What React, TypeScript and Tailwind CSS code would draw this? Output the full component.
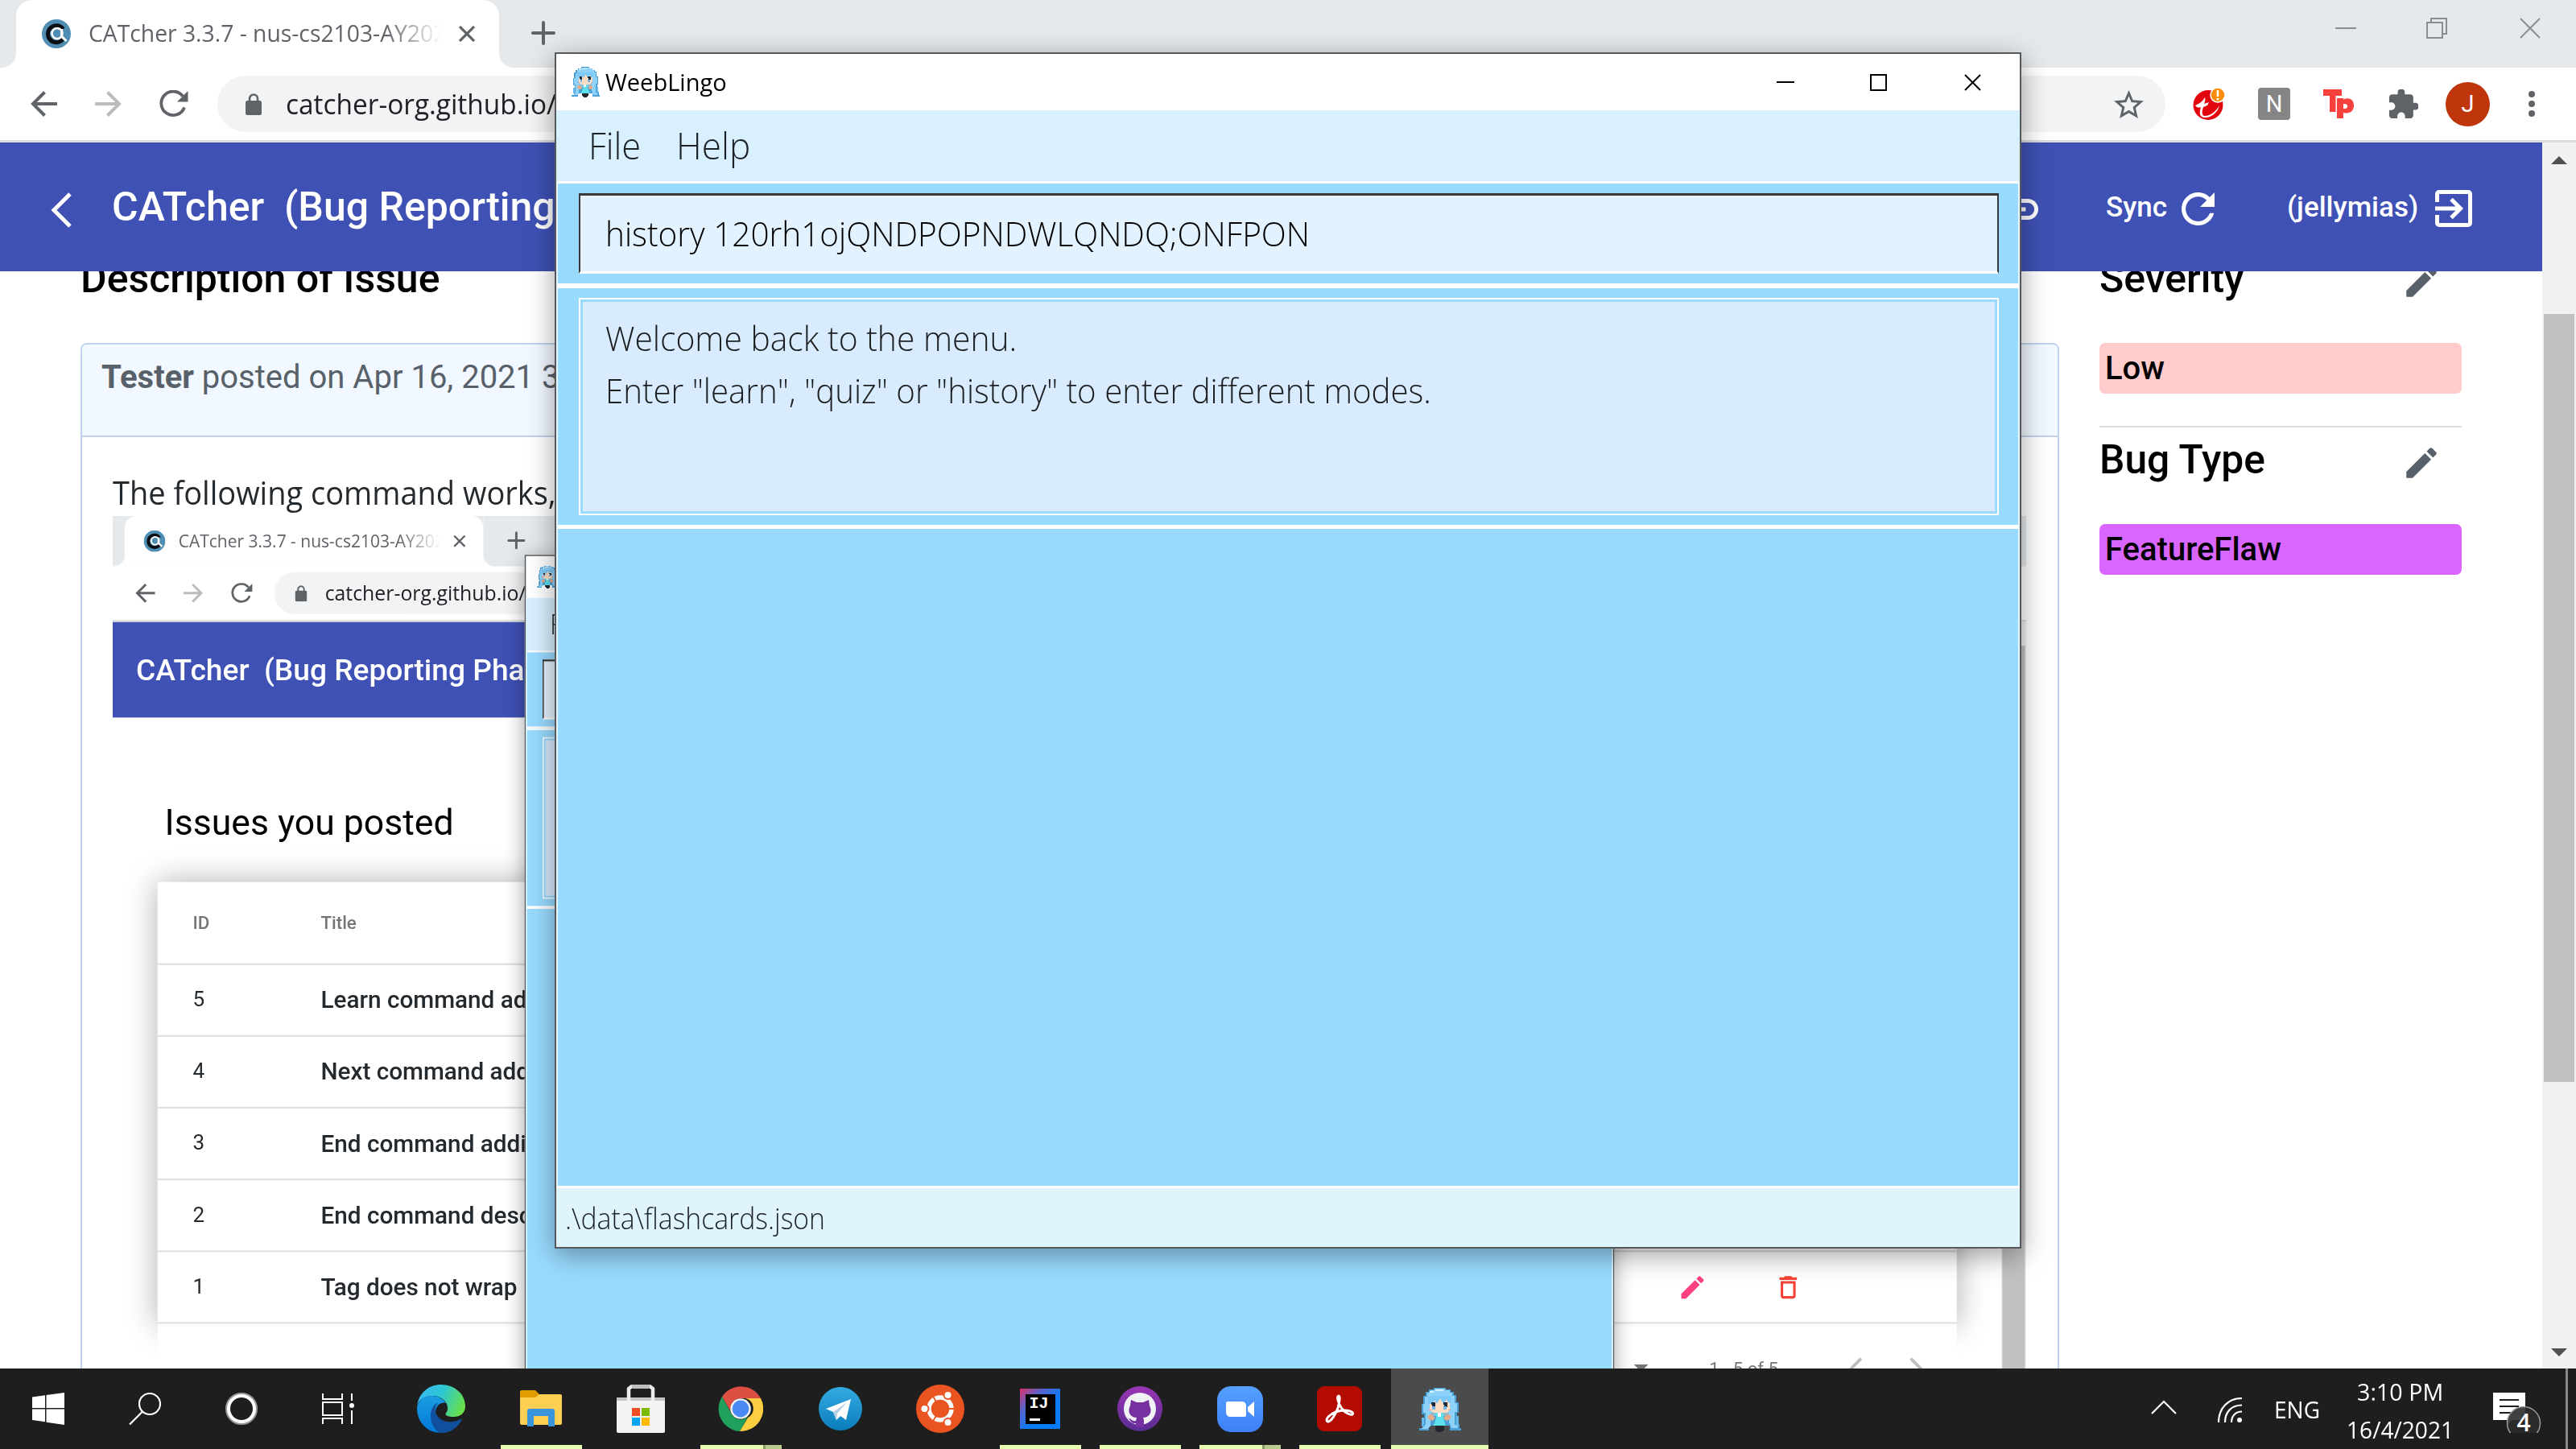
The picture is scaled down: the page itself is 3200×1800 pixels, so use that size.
import React, { useLayoutEffect, useRef, useState } from "react";

/* Text squeezed or stretched to a given width. */
function Fit({ w, className = "", children }: { w: number; className?: string; children: React.ReactNode }) {
  const ref = useRef<HTMLSpanElement>(null);
  const [sx, setSx] = useState(1);
  useLayoutEffect(() => {
    if (ref.current && ref.current.offsetWidth) setSx(w / ref.current.offsetWidth);
  }, [w]);
  return (
    <span className={`block shrink-0 whitespace-pre ${className}`} style={{ width: w }}>
      <span ref={ref} className="inline-block origin-left" style={{ transform: `scaleX(${sx})` }}>
        {children}
      </span>
    </span>
  );
}

const segoe = "font-['Open_Sans','Noto_Sans',sans-serif]";
const roboto = "font-['Roboto',sans-serif]";

function Girl({ className }: { className: string }) {
  return (
    <svg viewBox="8 6 52 58" preserveAspectRatio="none" className={className} shapeRendering="crispEdges">
      <path d="M26 8h15v2h6v3h4v4h3v9h3v14h-2v14h3v5h2v3h-14v-6H20v6H8v-3h4v-4h2V42h-3V28h2V18h3v-5h4v-3h6z" fill="#4a9fd4" />
      <path d="M27 9h13v2h6v3h3v4h3v9h3v12h-3v16h4v4h-8l-3-8V40H22v16l-3 4h-8l5-6V40h-3V28h2V19h3v-5h4v-3h5z" fill="#8ed2fa" />
      <path d="M28 10h10v2H26v2h-5v-2h7z" fill="#d4f0ff" />
      <path d="M21 22h25v14l-4 4H26l-5-4z" fill="#fbdcc2" />
      <path d="M19 18h29v6l-3 4-3-5-4 5-4-6-4 6-3-4-3 5-5-2z" fill="#7cc8f6" />
      <path d="M23 26h5v6h-4zM38 26h5v6h-4z" fill="#1d2a3b" />
      <path d="M24 31h4v4h-4zM38 31h4v4h-4z" fill="#6fb4ea" />
      <path d="M20 35h3v2h-3zM44 35h3v2h-3z" fill="#f59a86" />
      <path d="M22 40h23v4H22z" fill="#8fb9cf" />
      <path d="M19 43l4-2 5 5-4 4-5-3zM47 43l-4-2-5 5 4 4 5-3z" fill="#dfab8c" />
      <path d="M28 40h10v6l3 10H26l3-10z" fill="#5be0ec" />
      <path d="M31 40h4v5h-4z" fill="#f4f4f4" />
      <path d="M28 56h11v5l-3 3h-5l-3-3z" fill="#22282e" />
      <path d="M11 46h3v8l-3 4zM54 44h3v12h-3z" fill="#67b9ec" />
    </svg>
  );
}

function Favicon() {
  return (
    <svg viewBox="0 0 36 36" className="h-9 w-9 shrink-0">
      <circle cx="18" cy="18" r="18" fill="#4f8db3" />
      <path d="M26.5 12A10.5 10.5 0 1 0 26 25" fill="none" stroke="#0b0f14" strokeWidth="5" />
      <circle cx="19" cy="17.500" r="6.500" fill="#4f8db3" stroke="#fff" strokeWidth="2.600" />
      <path d="M24.500 12v9l6 6" fill="none" stroke="#fff" strokeWidth="3" />
    </svg>
  );
}

function Pencil({ className }: { className: string }) {
  return (
    <svg viewBox="0 0 24 24" className={className} fill="currentColor">
      <path d="M3 17.250V21h3.750L17.810 9.940l-3.750-3.750L3 17.250zM20.710 7.040c.39-.39.39-1.020 0-1.410l-2.340-2.340c-.39-.39-1.020-.39-1.410 0l-1.830 1.830 3.750 3.750 1.830-1.830z" />
    </svg>
  );
}

function Refresh({ className }: { className: string }) {
  return (
    <svg viewBox="4 4 16 16" className={className} fill="currentColor">
      <path d="M17.650 6.350C16.200 4.900 14.210 4 12 4c-4.420 0-7.990 3.580-7.990 8s3.570 8 7.990 8c3.730 0 6.840-2.550 7.730-6h-2.080c-.82 2.330-3.040 4-5.650 4-3.310 0-6-2.690-6-6s2.690-6 6-6c1.660 0 3.140.69 4.220 1.780L13 11h7V4l-2.350 2.350z" />
    </svg>
  );
}

function ThinReload() {
  return (
    <svg viewBox="0 0 36 34" className="h-[34px] w-9 shrink-0" fill="none">
      <path d="M31 21.500A14.800 14.800 0 1 1 29 7.500" stroke="#5f6368" strokeWidth="3.800" />
      <path d="M35.500 1v13.500H22z" fill="#5f6368" />
    </svg>
  );
}

function BrowserFrame({ inner, children }: { inner?: boolean; children: React.ReactNode }) {
  return (
    <div className="flex h-[1700px] w-[3200px] flex-col bg-white">
      {/* tab strip */}
      <div className="flex h-[84px] shrink-0 bg-white">
        <div className="w-5 rounded-br-[18px] bg-[#e5e9ec]" />
        <div className="w-[600px] bg-[#e5e9ec]">
          <div className="flex h-full items-center rounded-t-[20px] bg-white pl-8">
            <Favicon />
            <div className="mb-[2px] ml-[22px] w-[438px] overflow-hidden [mask-image:linear-gradient(to_right,#000_84%,transparent_100%)]">
              <Fit w={444} className={`${segoe} text-[30px] leading-[42px] text-[#5f6368]`}>CATcher 3.3.7 - nus-cs2103-AY202</Fit>
            </div>
            <svg viewBox="0 0 20 20" className="ml-[22px] h-5 w-5" stroke="#5f6368" strokeWidth="3.200">
              <path d="M1 1l18 18M19 1L1 19" />
            </svg>
          </div>
        </div>
        <div className="flex flex-1 items-start rounded-bl-[18px] bg-[#e5e9ec]">
          <svg viewBox="0 0 30 30" className="mt-[26px] ml-[40px] h-[30px] w-[30px]" stroke="#5f6368" strokeWidth="4" strokeLinecap="round">
            <path d="M15 2v26M2 15h26" />
          </svg>
          <div className="ml-auto flex items-center pt-[22px] pr-[44px]">
            <div className="mr-[87px] h-[2px] w-[26px] bg-[#8b8e90]" />
            <svg viewBox="0 0 26 26" className="mr-[90px] h-[26px] w-[26px]" fill="none" stroke="#8b8e90" strokeWidth="2">
              <path d="M1 6h19v19H1zM6 6V1h19v19h-5" />
            </svg>
            <svg viewBox="0 0 26 26" className="h-[26px] w-[26px]" stroke="#8b8e90" strokeWidth="2">
              <path d="M1 1l24 24M25 1L1 25" />
            </svg>
          </div>
        </div>
      </div>
      {/* toolbar */}
      <div className="flex h-[93px] shrink-0 items-center border-b-[3px] border-[#d9dbdf] pr-[49px] pl-[38px]">
        <svg viewBox="0 0 33 32" className="h-8 w-[33px]" fill="none" stroke="#5f6368" strokeWidth="4">
          <path d="M33 16H4M17.500 1.500L3 16l14.500 14.500" />
        </svg>
        <svg viewBox="0 0 33 32" className="ml-[47px] h-8 w-[33px]" fill="none" stroke="#babcbe" strokeWidth="4">
          <path d="M0 16h29M15.500 1.500L30 16 15.500 30.500" />
        </svg>
        <div className="ml-[47px]"><ThinReload /></div>
        <div className="ml-9 flex h-[70px] w-[2420px] items-center rounded-full bg-[#f1f3f4] pr-[27px] pl-[35px]">
          <svg viewBox="0 0 20 27" className="h-[27px] w-5" fill="#5f6368">
            <path d="M2.500 9h15a2.500 2.500 0 0 1 2.500 2.500v13a2.500 2.500 0 0 1-2.500 2.500h-15A2.500 2.500 0 0 1 0 24.500v-13A2.500 2.500 0 0 1 2.500 9z" />
            <path d="M5 10V6.500a5 5 0 0 1 10 0V10" fill="none" stroke="#5f6368" strokeWidth="2.600" />
          </svg>
          <Fit w={336} className={`${segoe} ml-[30px] text-[35px] leading-[48px] text-[#202124]`}>catcher-org.github.io/</Fit>
          <svg viewBox="2 2 20 19" className="ml-auto h-[35px] w-[37px]" fill="#5f6368">
            <path d="M22 9.240l-7.190-.62L12 2 9.190 8.630 2 9.240l5.460 4.730L5.820 21 12 17.270 18.180 21l-1.630-7.030L22 9.240zM12 15.400l-3.760 2.270 1-4.280-3.320-2.880 4.380-.38L12 6.100l1.710 4.040 4.380.38-3.320 2.880 1 4.280L12 15.400z" />
          </svg>
        </div>
        <svg viewBox="0 0 40 40" className="ml-[34px] h-10 w-10">
          <circle cx="19" cy="21.500" r="18.500" fill="#e2050f" />
          <path d="M3 22c5-2 9-5 12-10 1 3 0 5-1 8l6-2-2 4-5 2c-2 6-2 11 2 11 7 0 14-6 18-13-2 9-11 16-19 15-6-1-6-6-4-13-2 1-5 1-7-2z" fill="#fff" />
          <circle cx="31" cy="9" r="9" fill="#ff8c0a" stroke="#fff" strokeWidth="1.500" />
          <path d="M31 3v8M31 13v2.500" stroke="#fff" strokeWidth="2.600" />
        </svg>
        <div className={`${roboto} ml-[41px] flex h-10 w-10 items-center justify-center rounded-[4px] bg-[#858585] text-[29px] leading-none text-white`}>N</div>
        <svg viewBox="0 0 38 36" className="ml-[41px] h-9 w-[38px]" fill="#f8403c">
          <path d="M0 0h23v8h-7.500v20H8V8H0z" />
          <path fillRule="evenodd" d="M17 11h8v1.500c8-3.500 13 1 13 7.500 0 7-5 11-13 9V36h-8zM25 18v6c7 1 7-7 0-6z" />
        </svg>
        <svg viewBox="2 1.500 20.500 20.500" className="ml-[44px] h-9 w-9" fill="#5f6368">
          <path d="M20.500 11H19V7c0-1.100-.9-2-2-2h-4V3.500C13 2.120 11.880 1 10.500 1S8 2.120 8 3.500V5H4c-1.100 0-1.990.9-1.990 2v3.800H3.500c1.490 0 2.700 1.210 2.700 2.700s-1.210 2.700-2.700 2.700H2V20c0 1.100.9 2 2 2h3.800v-1.500c0-1.490 1.210-2.700 2.700-2.700 1.490 0 2.700 1.210 2.700 2.700V22H17c1.100 0 2-.9 2-2v-4h1.500c1.380 0 2.500-1.120 2.500-2.500S21.880 11 20.500 11z" />
        </svg>
        <div className={`${roboto} ml-[34px] flex h-[55px] w-[55px] items-center justify-center rounded-full bg-[#bf360c] text-[29px] leading-none text-white`}>J</div>
        <div className="mr-auto ml-[48px] flex flex-col gap-1">
          <div className="h-2 w-2 rounded-full bg-[#5f6368]" />
          <div className="h-2 w-2 rounded-full bg-[#5f6368]" />
          <div className="h-2 w-2 rounded-full bg-[#5f6368]" />
        </div>
      </div>
      {/* viewport */}
      <div className="flex min-h-0 flex-1">
        <div className="flex w-[3158px] flex-col overflow-hidden">
          <header className={`${roboto} flex h-40 shrink-0 items-center bg-[#3f51b5] font-medium text-white`}>
            {inner ? (
              <div className="w-[39px]" />
            ) : (
              <svg viewBox="0 0 26 44" className="mt-2 mr-[50px] ml-[63px] h-11 w-[26px]" fill="none" stroke="#fff" strokeWidth="5">
                <path d="M24 2L4 22l20 20" />
              </svg>
            )}
            <div className="text-[50px] leading-[60px] whitespace-pre">CATcher  (Bug Reporting Phase)</div>
            <div className="mt-[4px] ml-auto flex items-center text-[35px] leading-[42px]">
              <svg viewBox="2 7 20 10" className="mt-[2px] mr-[84px] h-[26px] w-[52px]" fill="currentColor">
                <path d="M3.900 12c0-1.710 1.390-3.100 3.100-3.100h4V7H7c-2.760 0-5 2.240-5 5s2.240 5 5 5h4v-1.900H7c-1.710 0-3.100-1.390-3.100-3.100zM8 13h8v-2H8v2zm9-6h-4v1.900h4c1.710 0 3.100 1.390 3.100 3.100s-1.390 3.100-3.100 3.100h-4V17h4c2.760 0 5-2.240 5-5s-2.240-5-5-5z" />
              </svg>
              <Fit w={76} className="-mt-[3px]">Sync</Fit>
              <Refresh className="ml-[18px] h-[41px] w-[41px]" />
              <Fit w={163} className="-mt-[3px] ml-[90px]">(jellymias)</Fit>
              <svg viewBox="0 0 46 46" className="mr-[87px] ml-[21px] h-[46px] w-[46px]" fill="none" stroke="#fff" strokeWidth="5">
                <path d="M2.500 15V5a2.500 2.500 0 0 1 2.500-2.500h36A2.500 2.500 0 0 1 43.500 5v36a2.500 2.500 0 0 1-2.500 2.500H5A2.500 2.500 0 0 1 2.500 41V31" />
                <path d="M0 23h31M20 11.500L31.500 23 20 34.500" />
              </svg>
            </div>
          </header>
          <div className="min-h-0 flex-1 overflow-hidden">{children}</div>
        </div>
        <div className="flex flex-1 flex-col items-center bg-[#f1f1f1] pt-[17px] pb-[15px]">
          <svg viewBox="0 0 20 10" className="h-[10px] w-5" fill="#505050"><path d="M0 10L10 0l10 10z" /></svg>
          {inner ? (
            <div className="mt-[13px] h-[1400px] w-[38px] bg-[#c1c1c1]" />
          ) : (
            <div className="mt-[186px] h-[954px] w-[38px] bg-[#c1c1c1]" />
          )}
          <svg viewBox="0 0 20 10" className="mt-auto h-[10px] w-5" fill="#505050"><path d="M0 0l10 10L20 0z" /></svg>
        </div>
      </div>
    </div>
  );
}

function WeebWindow() {
  return (
    <div className={`${segoe} absolute top-[65px] left-[689px] flex h-[1486px] w-[1822px] flex-col border-2 border-[#55595c] bg-white shadow-[0_8px_32px_rgba(0,0,0,0.38)]`}>
      <div className="flex h-[70px] shrink-0 items-center pl-[19px]">
        <Girl className="mb-[2px] h-[39px] w-[35px]" />
        <Fit w={151} className="ml-[7px] text-[30px] leading-[42px] text-black">WeebLingo</Fit>
        <div className="ml-auto flex items-center pr-[48px]">
          <div className="mr-[94px] h-[2px] w-[22px] bg-black" />
          <div className="mr-[96px] h-[21px] w-[21px] border-2 border-black" />
          <svg viewBox="0 0 21 21" className="h-[21px] w-[21px]" stroke="#000" strokeWidth="2"><path d="M1 1l19 19M20 1L1 20" /></svg>
        </div>
      </div>
      <div className="flex h-[88px] shrink-0 items-center bg-[#d9f1ff] pb-[3px] pl-[40px] text-[46px] leading-[60px] font-light text-[#1c2226]">
        <Fit w={65}>File</Fit>
        <Fit w={92} className="ml-[44px]">Help</Fit>
      </div>
      <div className="flex min-h-0 flex-1 flex-col border-x-2 border-[#e8f6ff] bg-[#99dbff]">
        <div className="h-[130px] shrink-0 border-y-[3px] border-white pt-[12px] pr-[24px] pl-[26px]">
          <div className="flex h-[100px] items-center border-x-2 border-t-[3px] border-b-[3px] border-x-[#383838] border-t-[#383838] border-b-white bg-[#e3f2ff] pl-[31px] text-[42px] leading-[56px] font-light text-black">
            <Fit w={875}>history 120rh1ojQNDPOPNDWLQNDQ;ONFPON</Fit>
          </div>
        </div>
        <div className="h-[302px] shrink-0 border-t-[3px] border-b-[5px] border-white pt-[12px] pr-[24px] pl-[26px]">
          <div className="h-[270px] border-2 border-white p-[3px]">
            <div className="h-full bg-[#d9ebfe] pt-[12px] pl-[28px] text-[42px] leading-[65px] font-light text-[#1c1e20]">
              <Fit w={511}>Welcome back to the menu.</Fit>
              <Fit w={1026}>Enter "learn", "quiz" or "history" to enter different modes.</Fit>
            </div>
          </div>
        </div>
      </div>
      <div className="flex h-[76px] shrink-0 items-center border-t-[3px] border-white bg-[#e0f4fe] pt-[3px] pl-[11px] text-[36px] leading-[50px] font-light text-[#1c2226]">
        <Fit w={323}>.\data\flashcards.json</Fit>
      </div>
    </div>
  );
}

const issues: [number, string][] = [
  [5, "Learn command additional input"],
  [4, "Next command additional input"],
  [3, "End command additional input"],
  [2, "End command description"],
  [1, "Tag does not wrap"],
];

function IssueList() {
  return (
    <div className={roboto}>
      <div className="pt-[146px] pl-[87px] text-[60px] leading-[60px] whitespace-pre text-black">Issues you posted</div>
      <div className="mt-[69px] ml-[75px] h-[742px] w-[3009px] bg-white shadow-[0_0_50px_rgba(0,0,0,0.32)]">
        <div className="flex h-[139px] items-center border-b-[3px] border-[#e0e0e0] pl-[59px] text-[30px] font-medium text-[#757575]">
          <div className="w-[214px]">ID</div>
          <div>Title</div>
        </div>
        {issues.map(([id, title]) => (
          <div key={id} className="flex h-[120px] items-center border-b-[3px] border-[#e0e0e0] pl-[59px]">
            <div className="w-[214px] text-[35px] text-[#24292e]">{id}</div>
            <div className="text-[40px] font-medium text-[#24292e]">{title}</div>
            <div className="mr-[257px] ml-auto flex items-center">
              <Pencil className="h-[50px] w-[50px] text-[#ff4081]" />
              <svg viewBox="0 0 24 24" className="ml-[110px] h-[50px] w-[50px]" fill="#f44336">
                <path d="M6 19c0 1.100.9 2 2 2h8c1.100 0 2-.9 2-2V7H6v12zM8 9h8v10H8V9zm7.500-5l-1-1h-5l-1 1H5v2h14V4z" />
              </svg>
            </div>
          </div>
        ))}
      </div>
      <div className="relative ml-[75px] flex h-[128px] w-[3009px] items-center bg-white pt-[14px] pl-[2469px] text-[30px] text-[#757575]">
        <svg viewBox="0 0 24 12" className="h-3 w-6" fill="#757575"><path d="M0 0l12 12L24 0z" /></svg>
        <Fit w={115} className="ml-[102px]">1 - 5 of 5</Fit>
        <svg viewBox="0 0 22 36" className="ml-[119px] h-9 w-[22px]" fill="none" stroke="#bdbdbd" strokeWidth="5"><path d="M20 2L4 18l16 16" /></svg>
        <svg viewBox="0 0 22 36" className="ml-[79px] h-9 w-[22px]" fill="none" stroke="#bdbdbd" strokeWidth="5"><path d="M2 2l16 16L2 34" /></svg>
      </div>
    </div>
  );
}

function EarlierCapture() {
  return (
    <div className="h-[1070px] w-[2377px] overflow-hidden">
      <div className="relative h-[1700px] w-[3200px] origin-top-left scale-[0.7428]">
        <BrowserFrame inner>
          <IssueList />
        </BrowserFrame>
        <WeebWindow />
      </div>
    </div>
  );
}

function IssuePage() {
  return (
    <div className={`${roboto} flex`}>
      <div className="ml-[100px] w-[2458px]">
        <div className="-mt-[21px] h-[110px] text-[50px] leading-[60px] font-medium text-black">Description of Issue</div>
        <div className="h-[1400px] rounded-t-[8px] border-2 border-[#c0d3eb] bg-white">
          <div className="h-[115px] rounded-t-[6px] border-b-2 border-[#c0d3eb] bg-[#f1f8ff] pt-[17px] pl-[24px] text-[40px] leading-[48px] whitespace-pre text-[#586069]">
            <b>Tester</b> posted on Apr 16, 2021 3:08 PM
          </div>
          <div className="pt-[40px] pl-[38px]">
            <Fit w={551} className={`${segoe} h-[58px] text-[40px] leading-[58px] text-[#24292e]`}>The following command works,</Fit>
            <EarlierCapture />
          </div>
        </div>
      </div>
      <aside className="ml-[50px] w-[450px] text-black">
        <div className="-mt-[21px] flex h-[59px] items-center justify-between pr-[25px]">
          <Fit w={180} className="text-[50px] leading-[60px] font-medium">Severity</Fit>
          <Pencil className="mt-[9px] h-[50px] w-[50px] text-[#586069]" />
        </div>
        <div className="mt-[51px] h-[63px] rounded-[7px] bg-[#ffcccb] pt-[6px] pl-[7px] text-[40px] leading-[52px] font-medium">Low</div>
        <div className="mt-[40px] h-[2px] bg-[#dcdcdc]" />
        <div className="mt-[10px] flex h-[60px] items-center justify-between pr-[25px]">
          <Fit w={206} className="text-[50px] leading-[60px] font-medium">Bug Type</Fit>
          <Pencil className="mt-[8px] h-[50px] w-[50px] text-[#586069]" />
        </div>
        <div className="mt-[50px] h-[63px] rounded-[7px] bg-[#d966ff] pt-[6px] pl-[7px] text-[40px] leading-[52px] font-medium">FeatureFlaw</div>
      </aside>
    </div>
  );
}

function EdgeIcon() {
  return (
    <svg viewBox="0 0 60 60" className="h-[60px] w-[60px]">
      <defs>
        <linearGradient id="eg1" x1="0" x2="1" y1="0.2" y2="0.5">
          <stop offset="0" stopColor="#39b9f7" /><stop offset=".5" stopColor="#2cc6cf" /><stop offset="1" stopColor="#67e04c" />
        </linearGradient>
        <linearGradient id="eg2" x1="0" x2="0" y1="0" y2="1">
          <stop offset="0" stopColor="#1b9de2" /><stop offset="1" stopColor="#0078d7" />
        </linearGradient>
      </defs>
      <path d="M0 27C2 10 15 0 30 0c17 0 30 12 30 27 0 9-7 13-14 13-8 0-12-2-10-5 2-2 2-4 2-6 0-8-8-15-18-15C8 14 1 20 0 27z" fill="url(#eg1)" />
      <path d="M0 29c1-9 8-15 19-15 8 0 14 4 17 9-5-2-13 2-13 12 0 13 12 18 20 18 3 0 5-1 6-1-5 5-12 8-19 8C13 60 0 47 0 29z" fill="url(#eg2)" />
      <path d="M17 38c0-8 5-14 9-16-3 4-4 8-3 12 3 11 17 16 31 9 2-1 2 1 1 2-5 9-15 15-25 15-8-2-13-12-13-22z" fill="#114f9c" />
    </svg>
  );
}

function ExplorerIcon() {
  return (
    <svg viewBox="0 0 52 46" className="h-[46px] w-[52px]">
      <path d="M0 2a2 2 0 0 1 2-2h17l5 5v6H0z" fill="#e09c00" />
      <path d="M0 9h19l5-4h26a2 2 0 0 1 2 2v34a2 2 0 0 1-2 2H2a2 2 0 0 1-2-2z" fill="#ffcf53" />
      <path d="M9 45V26a3 3 0 0 1 3-3h28a3 3 0 0 1 3 3v19h-8V32H17v13z" fill="#3a94dc" />
    </svg>
  );
}

function StoreIcon() {
  return (
    <svg viewBox="0 0 60 60" className="h-[60px] w-[60px]">
      <path d="M0 16h60v6H0z" fill="#c4c4c4" />
      <path d="M15 20V5l4-3h22l4 3v15" fill="none" stroke="#ececec" strokeWidth="4.500" />
      <path d="M18 0h24l-2 5H20z" fill="#bdbdbd" />
      <path d="M0 20h60v38a2 2 0 0 1-2 2H2a2 2 0 0 1-2-2z" fill="#f2f2f2" />
      <path d="M19 29h10v10H19z" fill="#f25022" /><path d="M31 29h10v10H31z" fill="#7fba00" />
      <path d="M19 41h10v10H19z" fill="#00a4ef" /><path d="M31 41h10v10H31z" fill="#ffb900" />
    </svg>
  );
}

function ChromeIcon() {
  return (
    <svg viewBox="0 0 56 56" className="h-14 w-14">
      <path d="M5 13A28 28 0 0 1 53 15H28a13 13 0 0 0-12 17z" fill="#de4f43" />
      <path d="M5 13a28 28 0 0 0 22 43l10-18a13 13 0 0 1-21-5z" fill="#1fa15d" />
      <path d="M53 15a28 28 0 0 1-26 41l10-17a13 13 0 0 0-3-24z" fill="#ffcd41" />
      <circle cx="28" cy="28" r="12.800" fill="#f1f1f1" />
      <circle cx="28" cy="28" r="10.400" fill="#4a8af4" />
    </svg>
  );
}

function TelegramIcon() {
  return (
    <svg viewBox="0 0 54 54" className="h-[54px] w-[54px]">
      <defs><linearGradient id="tg" x1="0" x2="0" y1="0" y2="1"><stop offset="0" stopColor="#34aae2" /><stop offset="1" stopColor="#0a7dba" /></linearGradient></defs>
      <circle cx="27" cy="27" r="27" fill="url(#tg)" />
      <path d="M40 15L9 27l9 4 4 10 5-5 7 5z" fill="#fff" />
      <path d="M18 31l17-12-12 14-1 8z" fill="#b6cfe2" />
    </svg>
  );
}

function UbuntuIcon() {
  return (
    <svg viewBox="0 0 60 60" className="h-[60px] w-[60px]">
      <circle cx="30" cy="30" r="30" fill="#e95420" />
      <circle cx="30" cy="30" r="14" fill="none" stroke="#fff" strokeWidth="5.500" />
      <g stroke="#e95420" strokeWidth="1.800"><path d="M38 30h10M26 23l-6-10M26 37l-6 10" /></g>
      <g fill="#fff" stroke="#e95420" strokeWidth="2">
        <circle cx="10.500" cy="30" r="5" /><circle cx="39.500" cy="13" r="5" /><circle cx="39.500" cy="47" r="5" />
      </g>
    </svg>
  );
}

function IntelliJIcon() {
  return (
    <div className="flex h-[50px] w-[50px] items-center justify-center bg-[linear-gradient(135deg,#e0306c_0%,#5b63c9_28%,#087cfa_60%,#087cfa_100%)]">
      <div className="flex h-[37px] w-[37px] flex-col justify-between bg-black pt-[2px] pb-1 pl-[5px] font-['Liberation_Mono',monospace] text-[20px] leading-[20px] font-bold text-white">
        IJ
        <div className="h-[2.500px] w-[13px] bg-white" />
      </div>
    </div>
  );
}

function GithubIcon() {
  return (
    <svg viewBox="0 0 56 56" className="h-14 w-14">
      <defs>
        <linearGradient id="gh" x1="0" x2="0" y1="0" y2="1"><stop offset="0" stopColor="#9a35b4" /><stop offset="1" stopColor="#5a2c91" /></linearGradient>
      </defs>
      <circle cx="28" cy="28" r="28" fill="url(#gh)" />
      <circle cx="28" cy="28" r="20" fill="#f1f2f6" />
      <path d="M17 17l7 3h8l7-3 1 7c4 8 0 15-8 15l1 3v9H23v-5c-5 1-7-3-9-6 3 0 4 4 9 3l1-4c-8 0-12-7-8-15z" fill="#77309f" />
    </svg>
  );
}

function ZoomIcon() {
  return (
    <svg viewBox="0 0 57 57" className="h-[57px] w-[57px]">
      <defs><linearGradient id="zm" x1="0" x2="0" y1="0" y2="1"><stop offset="0" stopColor="#56a0ff" /><stop offset="1" stopColor="#3d80f8" /></linearGradient></defs>
      <rect width="57" height="57" rx="17" fill="url(#zm)" />
      <path d="M11 21a2 2 0 0 1 2-2h17c4 0 6 2 6 6v11a2 2 0 0 1-2 2H17c-4 0-6-2-6-6zM38 26l8-7v19l-8-7z" fill="#fff" />
    </svg>
  );
}

function AcrobatIcon() {
  return (
    <svg viewBox="0 0 56 56" className="h-14 w-14">
      <rect width="56" height="56" rx="9" fill="#b30b00" />
      <path d="M27 12c-3 0-1 9 4 16 4 5 10 8 13 7 2-2-2-5-9-5-8 0-16 3-21 8-3 3-2 6 0 6 4-1 9-9 12-17 2-7 3-15 1-15z" fill="none" stroke="#fff" strokeWidth="3" strokeLinejoin="round" />
    </svg>
  );
}

const tasks: { icon: React.ReactNode; bar?: "one" | "many" }[] = [
  { icon: <EdgeIcon /> },
  { icon: <ExplorerIcon />, bar: "one" },
  { icon: <StoreIcon /> },
  { icon: <ChromeIcon />, bar: "many" },
  { icon: <TelegramIcon /> },
  { icon: <UbuntuIcon /> },
  { icon: <IntelliJIcon />, bar: "one" },
  { icon: <GithubIcon />, bar: "one" },
  { icon: <ZoomIcon />, bar: "many" },
  { icon: <AcrobatIcon />, bar: "one" },
];

function Taskbar() {
  return (
    <div className={`${segoe} flex h-[100px] bg-[#1e1e1e] text-white`}>
      <div className="flex w-[120px] items-center justify-center">
        <svg viewBox="0 0 40 40" className="h-10 w-10" fill="#fff">
          <path d="M0 5.500l16-2.300V19H0zM17.500 3L40 0v19H17.500zM0 20.500h16v15.700L0 34zM17.500 20.500H40V40l-22.500-3.200z" />
        </svg>
      </div>
      <div className="flex w-[120px] items-center justify-center">
        <svg viewBox="0 0 40 40" className="h-10 w-10" fill="none" stroke="#fff" strokeWidth="2.200">
          <circle cx="26" cy="14" r="13" /><path d="M17 23.500L1 39.500" />
        </svg>
      </div>
      <div className="flex w-[120px] items-center justify-center">
        <svg viewBox="0 0 40 40" className="h-10 w-10" fill="none">
          <circle cx="20" cy="20" r="18.500" stroke="#9a9a9a" strokeWidth="3" /><circle cx="20" cy="20" r="16" stroke="#fff" strokeWidth="4" />
        </svg>
      </div>
      <div className="mr-[6px] flex w-[120px] items-center justify-center">
        <svg viewBox="0 0 40 38" className="h-[38px] w-10" fill="none" stroke="#fff" strokeWidth="2">
          <path d="M1 0v7h24V0M1 11h24v16H1zM1 38v-7h24v7M37 0v9M37 21v17" /><circle cx="37" cy="15" r="3" fill="#fff" stroke="none" />
        </svg>
      </div>
      {tasks.map((t, i) => (
        <div key={i} className="flex w-[124px] flex-col items-center">
          <div className="flex h-[95px] items-center pt-[5px]">{t.icon}</div>
          {t.bar === "one" && <div className="h-[5px] w-[101px] bg-[#e6ffb0]" />}
          {t.bar === "many" && (
            <div className="flex h-[5px] w-[101px]">
              <div className="w-[78px] bg-[#e6ffb0]" /><div className="w-[3px] bg-[#8d9b6c]" /><div className="flex-1 bg-[#b8cc8d]" />
            </div>
          )}
        </div>
      ))}
      <div className="ml-[2px] flex w-[121px] flex-col items-center border-b-[5px] border-[#e6ffb0] bg-[#4b4b4b] pt-[22px]">
        <Girl className="h-[57px] w-[52px]" />
      </div>
      <div className="ml-auto flex items-center">
        <svg viewBox="0 0 32 18" className="mr-[51px] mb-1 h-[18px] w-8" fill="none" stroke="#fff" strokeWidth="2.200"><path d="M1 17L16 2l15 15" /></svg>
        <svg viewBox="0 0 30 31" className="mt-[3px] mr-[40px] h-[31px] w-[30px]" fill="none" stroke="#fff" strokeWidth="2.200">
          <path d="M1 31C1 13 13 1 30 1M9 31c0-13 8-21.500 21-21.500M17 31c0-8 5-13.500 13-13.500" /><circle cx="27" cy="28" r="3" fill="#fff" stroke="none" />
        </svg>
        <Fit w={57} className="mt-[1px] mr-[33px] text-[30px] leading-[42px]">ENG</Fit>
        <div className="mt-[3px] mr-[49px] flex flex-col items-center text-[30px] leading-[47px]">
          <Fit w={107}>3:10 PM</Fit>
          <Fit w={133}>16/4/2021</Fit>
        </div>
        <div className="relative mr-[30px] h-[60px] w-[60px]">
          <svg viewBox="0 0 60 60" className="h-full w-full">
            <path d="M0 10h40v34H24l-7 7v-7H0z" fill="#fff" />
            <path d="M8 19h24M8 27h24M8 35h15" stroke="#1e1e1e" strokeWidth="2.200" />
            <circle cx="38" cy="48" r="20.500" fill="#2b2b2b" fillOpacity=".9" stroke="#9a9a9a" strokeWidth="1.500" />
          </svg>
          <div className="absolute top-[28px] left-[18px] w-10 text-center text-[30px] leading-[38px] font-semibold">4</div>
        </div>
        <div className="mr-[10px] h-[100px] w-[3px] bg-[#8a8a8a]" />
      </div>
    </div>
  );
}

export default function App() {
  return (
    <div className="relative h-[1800px] w-[3200px] overflow-hidden bg-white">
      <BrowserFrame>
        <IssuePage />
      </BrowserFrame>
      <WeebWindow />
      <div className="relative z-10">
        <Taskbar />
      </div>
    </div>
  );
}
